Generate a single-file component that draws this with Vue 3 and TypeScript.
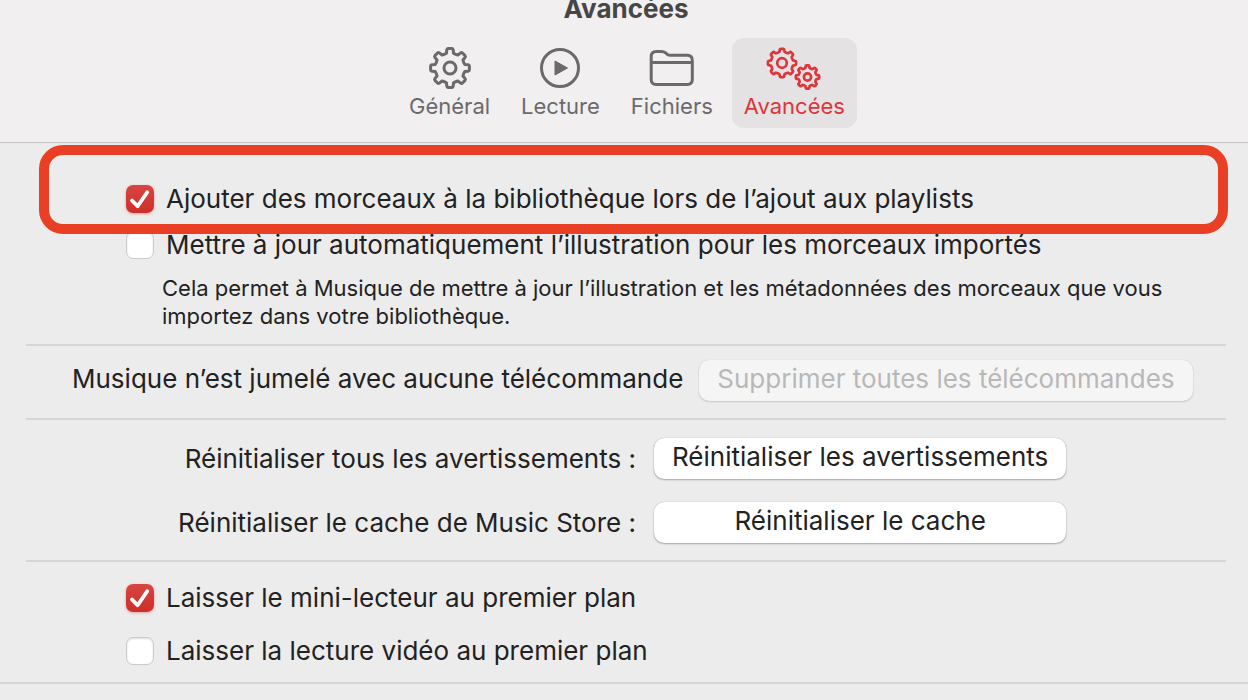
<script setup lang="ts">
import { ref } from 'vue'

type TabId = 'general' | 'playback' | 'files' | 'advanced'

const tabs: { id: TabId; label: string }[] = [
  { id: 'general', label: 'Général' },
  { id: 'playback', label: 'Lecture' },
  { id: 'files', label: 'Fichiers' },
  { id: 'advanced', label: 'Avancées' },
]
const active = ref<TabId>('advanced')

const addToLibrary = ref(true)
const updateArtwork = ref(false)
const miniPlayerOnTop = ref(true)
const videoOnTop = ref(false)

// Closed gear outline: `teeth` teeth between the radii `inner` and `outer`.
function gear(cx: number, cy: number, outer: number, inner: number, teeth: number): string {
  const step = (Math.PI * 2) / teeth
  const at = (r: number, a: number) =>
    `${(cx + r * Math.sin(a)).toFixed(2)} ${(cy - r * Math.cos(a)).toFixed(2)}`
  let d = ''
  for (let i = 0; i < teeth; i++) {
    const a = i * step
    d += `${i ? 'L' : 'M'}${at(inner, a - step * 0.3)}`
    d += `L${at(outer - 1, a - step * 0.22)}Q${at(outer, a - step * 0.2)} ${at(outer, a - step * 0.12)}`
    d += `L${at(outer, a + step * 0.12)}Q${at(outer, a + step * 0.2)} ${at(outer - 1, a + step * 0.22)}`
    d += `L${at(inner, a + step * 0.3)}`
    d += `Q${at(inner - 0.6, a + step * 0.5)} ${at(inner, a + step * 0.7)}`
  }
  return d + 'Z'
}
const generalGear = gear(25, 26, 19.5, 15.2, 8)
const largeGear = gear(20, 21, 14.1, 11.4, 8)
const smallGear = gear(45.5, 35, 11.7, 9.2, 8)
</script>

<template>
  <main class="window">
    <header class="toolbar">
      <h1 class="title">Avancées</h1>
      <nav class="tabs">
        <button
          v-for="tab in tabs"
          :key="tab.id"
          type="button"
          class="tab"
          :class="{ active: active === tab.id }"
          @click="active = tab.id"
        >
          <svg v-if="tab.id === 'general'" class="icon" width="50" height="52" viewBox="0 0 50 52">
            <path :d="generalGear" />
            <circle cx="25" cy="26" r="6" />
          </svg>
          <svg v-else-if="tab.id === 'playback'" class="icon" width="50" height="52" viewBox="0 0 50 52">
            <circle cx="25" cy="26" r="18.5" />
            <path class="solid" d="M20 19v14l12.500-7z" />
          </svg>
          <svg v-else-if="tab.id === 'files'" class="icon" width="50" height="52" viewBox="0 0 50 52">
            <path d="M4.200 14.500q0-5 5-5h5.600q2 0 3.500 1.200l2 1.600q1.300 1 3 1h17q5 0 5 5v19.200q0 5-5 5H9.200q-5 0-5-5zM4.200 20.500h41" />
          </svg>
          <svg v-else class="icon fine" width="64" height="52" viewBox="0 0 64 52">
            <path :d="largeGear" />
            <circle cx="20" cy="21" r="4.800" />
            <path :d="smallGear" />
            <circle cx="45.500" cy="35" r="3.600" />
          </svg>
          <span>{{ tab.label }}</span>
        </button>
      </nav>
    </header>

    <section class="group library">
      <div class="highlight">
        <label class="check">
          <input v-model="addToLibrary" type="checkbox" />
          <span>Ajouter des morceaux à la bibliothèque lors de l’ajout aux playlists</span>
        </label>
      </div>
      <label class="check">
        <input v-model="updateArtwork" type="checkbox" />
        <span>Mettre à jour automatiquement l’illustration pour les morceaux importés</span>
      </label>
      <p class="hint">
        Cela permet à Musique de mettre à jour l’illustration et les métadonnées des morceaux que vous
        importez dans votre bibliothèque.
      </p>
    </section>

    <section class="group remotes">
      <span>Musique n’est jumelé avec aucune télécommande</span>
      <button type="button" class="push" disabled>Supprimer toutes les télécommandes</button>
    </section>

    <section class="group resets">
      <label for="reset-warnings">Réinitialiser tous les avertissements :</label>
      <button id="reset-warnings" type="button" class="push">Réinitialiser les avertissements</button>
      <label for="reset-cache">Réinitialiser le cache de Music Store :</label>
      <button id="reset-cache" type="button" class="push">Réinitialiser le cache</button>
    </section>

    <section class="foreground">
      <label class="check">
        <input v-model="miniPlayerOnTop" type="checkbox" />
        <span>Laisser le mini-lecteur au premier plan</span>
      </label>
      <label class="check">
        <input v-model="videoOnTop" type="checkbox" />
        <span>Laisser la lecture vidéo au premier plan</span>
      </label>
    </section>
  </main>
</template>

<style>
body {
  background: #ececec;
}
</style>

<style scoped>
.window {
  min-height: 100vh;
  overflow: hidden;
  background: #ececec;
  color: #222;
  font-family: Inter, "Liberation Sans", sans-serif;
  font-size: 26px;
  line-height: 32px;
}
.window * {
  box-sizing: border-box;
}
.toolbar {
  display: flow-root;
  height: 143px;
  background: #f1eff0;
  border-bottom: 1px solid #c4c3c4;
}
.title {
  margin: -7px 0 0 4px;
  color: #474647;
  font-size: 26px;
  line-height: 32px;
  font-weight: 700;
  text-align: center;
}
.tabs {
  display: flex;
  justify-content: center;
  gap: 7px;
  margin-top: 13px;
  padding-left: 6px;
}
.tab {
  display: flex;
  flex-direction: column;
  align-items: center;
  padding: 4px 12px 8px;
  height: 90px;
  border: 0;
  border-radius: 12px;
  background: transparent;
  color: #6b6a6b;
  font: inherit;
  font-size: 22px;
  line-height: 24px;
}
.tab.active {
  background: #e4e2e3;
  color: #dc363b;
}
.icon {
  flex: none;
  fill: none;
  stroke: currentColor;
  stroke-width: 3;
  stroke-linejoin: round;
}
.icon.fine {
  stroke-width: 2.7;
}
.icon .solid {
  fill: currentColor;
  stroke-width: 1;
}
.group {
  margin: 0 22px 0 26px;
  border-bottom: 2px solid #d5d5d5;
}
.highlight {
  position: relative;
  z-index: 1;
  display: flex;
  margin: 2px -2px 0 13px;
  padding: 28px 0 9px 77px;
  border: 10px solid #e83f25;
  border-radius: 24px;
}
.check {
  display: flex;
  align-items: center;
  gap: 12px;
  white-space: nowrap;
}
.check input {
  appearance: none;
  flex: none;
  width: 28px;
  height: 28px;
  margin: 0;
  border: 1px solid #cbcbcb;
  border-radius: 7px;
  background: #fff;
  box-shadow: inset 0 1px 2px #0002;
}
.check input:checked {
  border: 0;
  background:
    url("data:image/svg+xml,%3Csvg xmlns='http://www.w3.org/2000/svg' viewBox='0 0 28 28'%3E%3Cpath d='M6 15.500l5.600 5.700 9.600-14' fill='none' stroke='white' stroke-width='3.800' stroke-linecap='round' stroke-linejoin='round'/%3E%3C/svg%3E"),
    linear-gradient(#d84543, #cd2f29);
  box-shadow: 0 1px 3px #cd2f2966;
}
.library {
  padding-bottom: 14px;
}
.library > .check {
  margin: -5px 0 0 100px;
}
.hint {
  margin: 13px 40px 0 136px;
  font-size: 22px;
  line-height: 28px;
}
.remotes {
  display: flex;
  align-items: center;
  gap: 16px;
  padding: 14px 0 17px 46px;
  white-space: nowrap;
}
.remotes span {
  padding-bottom: 4px;
}
.push {
  height: 41px;
  padding: 0 18px 4px;
  border: 0;
  border-radius: 10px;
  background: #fff;
  color: #222;
  font: inherit;
  box-shadow: 0 0 1px #0005, 0 1px 2px #0004;
}
.push:disabled {
  background: #f5f5f5;
  color: #b8b8b8;
  box-shadow: 0 0 1px #0003, 0 1px 2px #0002;
}
.resets {
  display: grid;
  grid-template-columns: 610px max-content;
  gap: 23px 18px;
  align-items: center;
  padding: 18px 0 17px;
  white-space: nowrap;
}
.resets label {
  text-align: right;
}
.foreground {
  display: flex;
  flex-direction: column;
  gap: 21px;
  padding: 20px 0 15px 126px;
  border-bottom: 2px solid #d5d5d5;
}
</style>
